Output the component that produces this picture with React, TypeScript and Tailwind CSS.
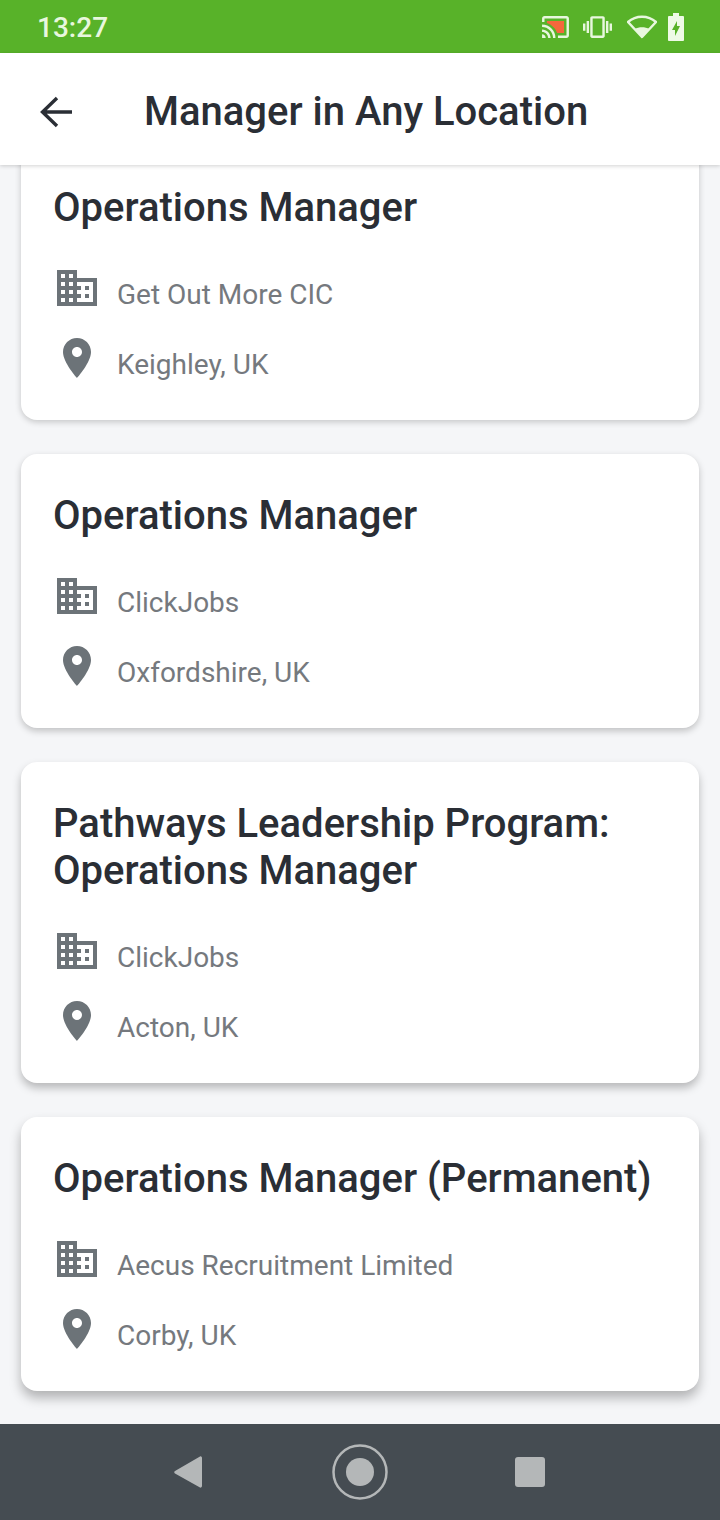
const jobs = [
  { title: "Operations Manager", company: "Get Out More CIC", place: "Keighley, UK", shadow: "shadow-[0_2px_6px_rgba(0,0,0,0.2)]" },
  { title: "Operations Manager", company: "ClickJobs", place: "Oxfordshire, UK", shadow: "shadow-[0_3px_7px_rgba(0,0,0,0.22)]" },
  { title: "Pathways Leadership Program: Operations Manager", company: "ClickJobs", place: "Acton, UK", shadow: "shadow-[0_5px_9px_rgba(0,0,0,0.25)]" },
  { title: "Operations Manager (Permanent)", company: "Aecus Recruitment Limited", place: "Corby, UK", shadow: "shadow-[0_7px_12px_rgba(0,0,0,0.28)]" },
];

function Building() {
  return (
    <svg width="40" height="36" viewBox="2 3 20 18" className="shrink-0">
      <path
        fill="#6c7378"
        d="M12 7V3H2v18h20V7H12zM6 19H4v-2h2v2zm0-4H4v-2h2v2zm0-4H4V9h2v2zm0-4H4V5h2v2zm4 12H8v-2h2v2zm0-4H8v-2h2v2zm0-4H8V9h2v2zm0-4H8V5h2v2zm10 12h-8v-2h2v-2h-2v-2h2v-2h-2V9h8v10zm-2-8h-2v2h2v-2zm0 4h-2v2h2v-2z"
      />
    </svg>
  );
}

function Pin() {
  return (
    <svg width="28" height="40" viewBox="5 2 14 20" className="shrink-0">
      <path
        fill="#6c7378"
        d="M12 2C8.130 2 5 5.130 5 9c0 5.250 7 13 7 13s7-7.750 7-13c0-3.870-3.130-7-7-7zm0 9.500c-1.380 0-2.500-1.120-2.500-2.500s1.120-2.500 2.500-2.500 2.500 1.120 2.500 2.500-1.120 2.500-2.500 2.500z"
      />
    </svg>
  );
}

function JobCard({ title, company, place, shadow, first }: { title: string; company: string; place: string; shadow: string; first?: boolean }) {
  return (
    <div className={`shrink-0 bg-white rounded-[16px] pt-[38px] px-[32px] pb-[35px] ${shadow} ${first ? "-mt-[19px]" : ""}`}>
      <h2 className="text-[40px] leading-[47px] font-medium text-[#2a2e35]">{title}</h2>
      <div className="mt-[44px] flex items-center h-[40px]">
        <div className="w-[48px] flex justify-center -mt-[15px]">
          <Building />
        </div>
        <span className="ml-[16px] text-[28px] text-[#75797e]">{company}</span>
      </div>
      <div className="mt-[30px] flex items-center h-[40px]">
        <div className="w-[48px] flex justify-center -mt-[14px]">
          <Pin />
        </div>
        <span className="ml-[16px] text-[28px] text-[#75797e]">{place}</span>
      </div>
    </div>
  );
}

export default function App() {
  return (
    <div className="w-[720px] h-[1520px] flex flex-col bg-[#f5f6f8] overflow-hidden font-['Roboto',sans-serif]">
      {/* status bar */}
      <div className="h-[53px] shrink-0 bg-[#58b229] flex items-center pl-[37px] pr-[36px] text-[#e8f7de]">
        <span className="text-[28px] font-medium leading-none pt-[3px]">13:27</span>
        <div className="ml-auto flex items-center">
          <svg width="29" height="22" viewBox="1 3 22 18" className="mr-[13px] mt-[1px]">
            <path d="M19 7H5v1.630c3.960 1.280 7.090 4.410 8.370 8.370H19V7z" fill="#f4683c" />
            <path
              fill="#e8f7de"
              d="M1 18v3h3c0-1.660-1.340-3-3-3zm0-4v2c2.760 0 5 2.240 5 5h2c0-3.870-3.130-7-7-7zm0-4v2c4.970 0 9 4.030 9 9h2c0-6.080-4.930-11-11-11zm20-7H3c-1.100 0-2 .9-2 2v3h2V5h18v14h-7v2h7c1.100 0 2-.9 2-2V5c0-1.100-.9-2-2-2z"
            />
          </svg>
          <svg width="29" height="22" viewBox="0 3 24 18" className="mr-[15px] mt-[1px]">
            <path
              fill="#e8f7de"
              d="M0 15h2V9H0v6zm3 2h2V7H3v10zm19-8v6h2V9h-2zm-3 8h2V7h-2v10zM16.500 3h-9C6.670 3 6 3.670 6 4.500v15c0 .83.67 1.500 1.500 1.500h9c.83 0 1.500-.67 1.500-1.500v-15c0-.83-.67-1.500-1.500-1.500zM16 19H8V5h8v14z"
            />
          </svg>
          <svg width="30" height="24" viewBox="0 0 30 24" className="mr-[11px]">
            <path d="M15 22L1 7C9 0 21 0 29 7Z" fill="none" stroke="#e8f7de" strokeWidth="2.500" strokeLinejoin="round" />
            <path d="M15 22L7.500 14C12 11.500 18 11.500 22.500 14Z" fill="#e8f7de" />
          </svg>
          <svg width="16" height="28" viewBox="0 0 16 28">
            <path fillRule="evenodd" fill="#eefae6" d="M5 0H11V3H15C15.500 3 16 3.500 16 4V27C16 27.500 15.500 28 15 28H1C0.500 28 0 27.500 0 27V4C0 3.500 0.500 3 1 3H5ZM9 8L4 17H7V23L12 13H9Z" />
          </svg>
        </div>
      </div>

      {/* header */}
      <header className="h-[112px] shrink-0 bg-white flex items-center relative z-10 shadow-[0_1px_4px_rgba(0,0,0,0.18)]">
        <svg width="32" height="32" viewBox="0 0 32 32" className="ml-[40px] mt-[6px]">
          <path d="M17 2L2.500 16L17 30M3 16H32" fill="none" stroke="#2a2e35" strokeWidth="3.400" />
        </svg>
        <h1 className="ml-[72px] pt-[5px] text-[40px] font-medium text-[#2a2e35]">Manager in Any Location</h1>
      </header>

      {/* job list */}
      <main className="flex-1 min-h-0 px-[21px] flex flex-col gap-[34px]">
        {jobs.map((job, i) => (
          <JobCard key={i} {...job} first={i === 0} />
        ))}
      </main>

      {/* nav bar */}
      <nav className="h-[96px] shrink-0 bg-[#454c52] flex items-center justify-center pr-[2px]">
        <svg width="28" height="32" viewBox="0 0 28 32" className="mr-[130px]">
          <path d="M26 0.500C27 0 28 1 28 2V30C28 31 27 32 26 31.500L1 17.500C0 17 0 15.500 1 15Z" fill="#b4b7b8" />
        </svg>
        <svg width="56" height="56" viewBox="0 0 56 56" className="mr-[127px]">
          <circle cx="28" cy="28" r="26.500" fill="none" stroke="#b4b7b8" strokeWidth="2.500" />
          <circle cx="28" cy="28" r="14" fill="#b4b7b8" />
        </svg>
        <div className="w-[30px] h-[30px] rounded-[3px] bg-[#b4b7b8]" />
      </nav>
    </div>
  );
}
